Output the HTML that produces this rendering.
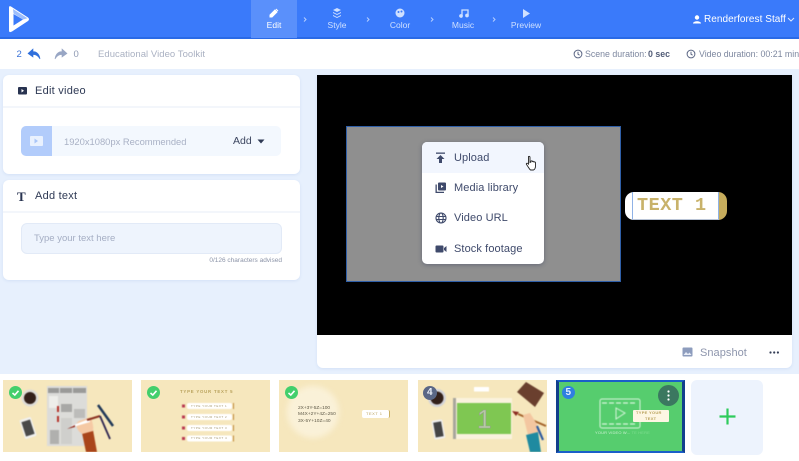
<!DOCTYPE html>
<html><head><meta charset="utf-8">
<style>
html,body{margin:0;padding:0}
body{width:799px;height:461px;overflow:hidden;position:relative;background:#e7f0fd;font-family:"Liberation Sans",sans-serif;color:#3a4560}
#w{position:absolute;left:0;top:0;width:799px;height:461px;filter:blur(.35px)}
.a{position:absolute}
.t{position:absolute;white-space:nowrap;line-height:1}
svg{position:absolute;overflow:visible}
.thumb{position:absolute;top:380px;width:129px;height:72px;background:#f6e7bd;overflow:hidden}
.chk{position:absolute;left:6px;top:6px;width:13px;height:13px;border-radius:50%;background:#43cf6c}
.nav{color:#cfe0ff;font-size:8.5px;text-align:center;width:50px}
.mi{font-size:11px;color:#3f4a6b;letter-spacing:.1px}
</style></head><body><div id="w">
<!-- header -->
<div class="a" style="left:0;top:0;width:799px;height:38px;background:#3a7afa"></div>
<div class="a" style="left:0;top:37px;width:799px;height:2px;background:#2a6ae6"></div>
<div class="a" style="left:251px;top:0;width:46px;height:38px;background:#5a90fb"></div>
<svg style="left:0;top:0" width="40" height="38"><path fill-rule="evenodd" d="M9 7.5Q9 5.5 11 6.5L28 17.5Q30 19.3 28 21L12 31.5Q9 33 9 30.5Z M13.5 14V25.5L23 19.5Z" fill="#fff"/><path d="M13 9L27.5 18.3L23 19.5L13.5 13.5Z" fill="#9dbefc"/></svg>
<svg style="left:269px;top:8px" width="10" height="10"><path d="M1 9V7L6 2L8 4L3 9Z M7 1L9 3" fill="#fff" stroke="#fff" stroke-width="1"/></svg>
<div class="t nav" style="left:249px;top:21px;color:#fff">Edit</div>
<svg style="left:332px;top:8px" width="10" height="10" fill="#cfe0ff"><path d="M5 0L9 2L5 4L1 2Z M1 4L5 6L9 4V5L5 7L1 5Z M1 7L5 9L9 7V8L5 10L1 8Z"/></svg>
<div class="t nav" style="left:312px;top:21px">Style</div>
<svg style="left:395px;top:8px" width="10" height="10"><circle cx="5" cy="5" r="4.5" fill="#cfe0ff"/><circle cx="3.5" cy="4" r="1" fill="#3a7afa"/><circle cx="6.5" cy="3.5" r="1" fill="#3a7afa"/></svg>
<div class="t nav" style="left:375px;top:21px">Color</div>
<svg style="left:459px;top:8px" width="10" height="10" fill="none" stroke="#cfe0ff" stroke-width="1.3"><path d="M3 8V2H9V7"/><circle cx="2" cy="8" r="1.2" fill="#cfe0ff"/><circle cx="8" cy="7.5" r="1.2" fill="#cfe0ff"/></svg>
<div class="t nav" style="left:438px;top:21px">Music</div>
<svg style="left:522px;top:8px" width="10" height="11"><path d="M1 1L8 5.5L1 10Z" fill="#cfe0ff"/></svg>
<div class="t nav" style="left:501px;top:21px">Preview</div>
<svg style="left:0;top:0" width="799" height="38" fill="none" stroke="#b5ceff" stroke-width="1"><path d="M304 17.5l2 2-2 2M367 17.5l2 2-2 2M431 17.5l2 2-2 2M493 17.5l2 2-2 2"/></svg>
<svg style="left:693px;top:15px" width="8" height="9" fill="#fff"><circle cx="4" cy="2.5" r="2.2"/><path d="M0 8.5C0 5.5 8 5.5 8 8.5Z"/></svg>
<div class="t" style="left:704px;top:14.5px;color:#fff;font-size:10px;letter-spacing:.05px">Renderforest Staff</div>
<svg style="left:787px;top:17px" width="8" height="6" fill="none" stroke="#dbe7ff" stroke-width="1"><path d="M1 1l3 3 3-3"/></svg>
<!-- sub bar -->
<div class="a" style="left:0;top:39px;width:799px;height:30px;background:#fff"></div>
<div class="t" style="left:16.5px;top:49.5px;font-size:9.5px;color:#3a72d8">2</div>
<svg style="left:27px;top:48px" width="14" height="12"><path d="M6 1L1 5.5L6 9V6.5C9 6.5 11 7.5 13 11C12.5 6.5 10 3.5 6 3.5Z" fill="#2f6fdc" stroke="#2f6fdc" stroke-width=".6"/></svg>
<svg style="left:54px;top:48px" width="14" height="12"><path d="M8 1L13 5.5L8 9V6.5C5 6.5 3 7.5 1 11C1.5 6.5 4 3.5 8 3.5Z" fill="#98a6c4" stroke="#98a6c4" stroke-width=".6"/></svg>
<div class="t" style="left:73.5px;top:49.5px;font-size:9.5px;color:#8e99b3">0</div>
<div class="t" style="left:98px;top:49.5px;font-size:9.5px;color:#aab1c2;letter-spacing:.05px">Educational Video Toolkit</div>
<svg style="left:573px;top:49px" width="10" height="10" fill="none" stroke="#5c6785" stroke-width="1"><circle cx="5" cy="5" r="3.9"/><path d="M5 2.8V5.2L6.6 6.2"/></svg>
<div class="t" style="left:585px;top:49.5px;font-size:8.8px;color:#7d879f">Scene duration:</div>
<div class="t" style="left:648px;top:49.5px;font-size:8.8px;color:#525c77;font-weight:bold">0 sec</div>
<svg style="left:686px;top:49px" width="10" height="10" fill="none" stroke="#5c6785" stroke-width="1"><circle cx="5" cy="5" r="3.9"/><path d="M5 2.8V5.2L6.6 6.2"/></svg>
<div class="t" style="left:699px;top:49.5px;font-size:8.8px;color:#7d879f">Video duration: 00:21 min</div>
<!-- left cards -->
<div class="a" style="left:3px;top:75px;width:297px;height:99px;background:#fff;border-radius:6px;box-shadow:0 1px 3px #d3e0f6"></div>
<div class="a" style="left:3px;top:106px;width:297px;height:2px;background:#f3f6fb"></div>
<svg style="left:17px;top:86px" width="11" height="10"><rect x="1" y="1" width="9" height="7.5" rx="1" fill="#283350"/><path d="M4.5 3L7 4.8L4.5 6.5Z" fill="#fff"/></svg>
<div class="t" style="left:35px;top:85.5px;font-size:11px;color:#2f3a55;letter-spacing:.25px">Edit video</div>
<div class="a" style="left:21px;top:126px;width:260px;height:30px;background:#f3f8fe;border-radius:5px"></div>
<div class="a" style="left:21px;top:126px;width:31px;height:30px;background:#b2ccfb;border-radius:5px 0 0 5px"></div>
<div class="a" style="left:30px;top:136px;width:13px;height:10px;background:#e9f1fe;border-radius:1px"></div>
<svg style="left:34px;top:138px" width="5" height="6"><path d="M0.5 0.5L4 3L0.5 5.5Z" fill="#a9c5f8"/></svg>
<div class="t" style="left:64px;top:136.5px;font-size:9.4px;color:#a9b1c5">1920x1080px Recommended</div>
<div class="t" style="left:233px;top:136px;font-size:10.5px;color:#3c4660">Add</div>
<svg style="left:257px;top:139px" width="8" height="5"><path d="M0.5 0.5H7.5L4 4.5Z" fill="#2f3a55"/></svg>
<div class="a" style="left:3px;top:180px;width:297px;height:100px;background:#fff;border-radius:6px;box-shadow:0 1px 3px #d3e0f6"></div>
<div class="a" style="left:3px;top:211px;width:297px;height:2px;background:#f3f6fb"></div>
<div class="t" style="left:17px;top:190px;font-family:'Liberation Serif',serif;font-weight:bold;font-size:13px;color:#283350">T</div>
<div class="t" style="left:35px;top:190.5px;font-size:11px;color:#2f3a55;letter-spacing:.25px">Add text</div>
<div class="a" style="left:21px;top:223px;width:259px;height:29px;background:#eef4fd;border:1px solid #e2eaf7;border-radius:6px"></div>
<div class="t" style="left:34px;top:234px;font-size:9.5px;color:#a5aec4">Type your text here</div>
<div class="t" style="right:517px;top:257.5px;font-size:6.5px;color:#8c94a8">0/126 characters advised</div>
<!-- preview -->
<div class="a" style="left:317px;top:75px;width:475px;height:293px;background:#fff;border-radius:0 0 6px 6px;box-shadow:0 1px 3px #d3e0f6"></div>
<div class="a" style="left:317px;top:75px;width:475px;height:260px;background:#000"></div>
<div class="a" style="left:346px;top:126px;width:273px;height:154px;background:#8f8f8f;border:1px solid #2f5fa8"></div>
<div class="a" style="left:422px;top:142px;width:122px;height:122px;background:#fff;border-radius:5px;box-shadow:0 1px 4px rgba(50,60,90,.45)"></div>
<div class="a" style="left:422px;top:142px;width:122px;height:31px;background:#f2f6fe;border-radius:5px 5px 0 0"></div>
<svg style="left:435px;top:152px" width="12" height="12" fill="#3f4a6b"><rect x="1" y="0.5" width="9" height="1.3"/><path d="M5.5 3L9.5 7H7V11H4V7H1.5Z"/></svg>
<div class="t mi" style="left:454px;top:152.5px">Upload</div>
<svg style="left:435px;top:182px" width="12" height="12" fill="#3f4a6b"><path d="M0.5 2.5H1.8V9.7H9V11H0.5Z"/><rect x="3" y="0.5" width="8" height="8" rx="1"/><path d="M6 3L8.5 4.5L6 6Z" fill="#fff"/></svg>
<div class="t mi" style="left:454px;top:182.5px">Media library</div>
<svg style="left:435px;top:212px" width="12" height="12" fill="none" stroke="#3f4a6b" stroke-width="1.1"><circle cx="6" cy="6" r="5"/><ellipse cx="6" cy="6" rx="2.2" ry="5"/><path d="M1 4.5H11M1 7.5H11"/></svg>
<div class="t mi" style="left:454px;top:212.5px">Video URL</div>
<svg style="left:435px;top:244px" width="12" height="10" fill="#3f4a6b"><rect x="0.5" y="1.5" width="8" height="7" rx="1"/><path d="M9 4L11.5 2V8L9 6Z"/></svg>
<div class="t mi" style="left:454px;top:243.5px">Stock footage</div>
<svg style="left:525px;top:155px" width="12" height="16"><path d="M3.5 1.5C4.5 1 5 1.7 5 2.5V7.5L6 7V6C7 5.5 7.5 6 7.5 6.5C8.5 6 9 6.5 9 7C10 6.5 10.5 7.5 10.5 8V11C10.5 13 9.5 14.5 8.5 15H5.5C4 14 3.5 12 1.5 9.5C1 8.5 2 7.5 3.5 9V2.5C3.5 2 3.3 1.7 3.5 1.5Z" fill="#fff" stroke="#222" stroke-width=".9"/></svg>
<!-- text pill -->
<div class="a" style="left:709px;top:192px;width:18px;height:28px;background:#c6ac5c;border-radius:0 9px 9px 0"></div>
<div class="a" style="left:625px;top:192px;width:94px;height:28px;background:#fff;border-radius:9px 2px 2px 9px"></div>
<div class="a" style="left:632px;top:192px;width:85px;height:27px;border-left:1px solid #8fb2e6;border-right:1px solid #8fb2e6;border-bottom:1px solid #b9c4d6"></div>
<div class="t" style="left:637px;top:196.5px;font-family:'Liberation Mono',monospace;font-weight:bold;font-size:18.5px;color:#c8b26a;letter-spacing:.5px;white-space:pre">TEXT 1</div>
<!-- snapshot -->
<svg style="left:682px;top:347px" width="11" height="10"><rect x="0.5" y="0.5" width="10" height="9" rx="1" fill="#8d9cbd"/><path d="M1.5 8L4 5L6 7L7.5 5.5L9.5 8Z" fill="#e7ecf6"/></svg>
<div class="t" style="left:700px;top:347.5px;font-size:11px;color:#8d95ac;letter-spacing:.05px">Snapshot</div>
<svg style="left:769px;top:351px" width="11" height="3" fill="#333c55"><circle cx="1.5" cy="1.5" r="1.1"/><circle cx="5.2" cy="1.5" r="1.1"/><circle cx="8.9" cy="1.5" r="1.1"/></svg>
<!-- bottom strip -->
<div class="a" style="left:0;top:374px;width:799px;height:87px;background:#fff"></div>
<div class="thumb" style="left:3px">
 <svg width="129" height="72" style="left:0;top:0;filter:blur(.5px)">
  <rect x="44" y="6" width="40" height="60" fill="#dcdcd9"/>
  <rect x="45" y="8" width="11" height="5" fill="#9a9a98"/><rect x="57" y="8" width="12" height="5" fill="#9a9a98"/><rect x="70" y="8" width="13" height="5" fill="#9a9a98"/>
  <rect x="46" y="16" width="9" height="12" fill="#eeeeea"/><rect x="58" y="24" width="11" height="8" fill="#a8a8a6"/><rect x="71" y="29" width="11" height="9" fill="#bcbcba"/>
  <rect x="47" y="50" width="9" height="14" fill="#b0b0ae"/><rect x="58" y="38" width="11" height="26" fill="#cfcfcc"/>
  <rect x="54" y="26" width="2" height="6" fill="#b5332b"/><rect x="54" y="36" width="2" height="6" fill="#b5332b"/>
  <circle cx="27" cy="18" r="8.5" fill="#dedcd6"/><circle cx="27" cy="18" r="6" fill="#33201a"/>
  <g transform="rotate(-18 25 48)"><rect x="19" y="38" width="12" height="20" rx="1.5" fill="#f0f0ee"/><rect x="20.5" y="40.5" width="9" height="15" fill="#4a4a4a"/></g>
  <path d="M83 72L79 53L90 50L94 72Z" fill="#a9451a"/>
  <path d="M76 41C71 44 74 50 79 54L90 51C91 46 89 42 88 37Z" fill="#f5c9a4"/>
  <path d="M68 46L86 39L87 42L70 47Z" fill="#fff"/><path d="M64 49L72 45L72 47Z" fill="#932a1f"/>
  <path d="M84 40L97 36" stroke="#8b3222" stroke-width="2"/>
  <path d="M95 25L110 46" stroke="#1f3758" stroke-width="2.5"/><path d="M97 36L107 59" stroke="#2c2450" stroke-width="1.8"/>
 </svg>
 <div class="chk"></div>
 <svg width="13" height="13" style="left:6px;top:6px"><path d="M3.5 7L5.8 9L9.5 4.8" fill="none" stroke="#fff" stroke-width="1.6"/></svg>
</div>
<div class="thumb" style="left:141px">
 <div class="t" style="left:39px;top:10px;font-size:4.3px;color:#b9a25c;letter-spacing:.8px;font-weight:bold">TYPE YOUR TEXT 5</div>
 <svg width="129" height="72" style="left:0;top:0;filter:blur(.4px)">
  <g fill="#fff"><rect x="46" y="23" width="45" height="6" rx="2"/><rect x="46" y="34" width="45" height="6" rx="2"/><rect x="46" y="45" width="45" height="6" rx="2"/><rect x="46" y="55.5" width="45" height="6" rx="2"/></g>
  <g fill="#c08a3a"><rect x="92" y="23" width="1" height="6"/><rect x="92" y="34" width="1" height="6"/><rect x="92" y="45" width="1" height="6"/><rect x="92" y="55.5" width="1" height="6"/></g>
  <g fill="#b83a52"><rect x="41" y="24.5" width="3" height="3"/><rect x="41" y="35.5" width="3" height="3"/><rect x="41" y="46.5" width="3" height="3"/><rect x="41" y="57" width="3" height="3"/></g>
 </svg>
 <div class="t" style="left:50px;top:24.5px;font-size:3px;color:#a89a70;letter-spacing:.5px">TYPE YOUR TEXT 1</div>
 <div class="t" style="left:50px;top:35.5px;font-size:3px;color:#a89a70;letter-spacing:.5px">TYPE YOUR TEXT 2</div>
 <div class="t" style="left:50px;top:46.5px;font-size:3px;color:#a89a70;letter-spacing:.5px">TYPE YOUR TEXT 3</div>
 <div class="t" style="left:50px;top:57px;font-size:3px;color:#a89a70;letter-spacing:.5px">TYPE YOUR TEXT 4</div>
 <div class="chk"></div>
 <svg width="13" height="13" style="left:6px;top:6px"><path d="M3.5 7L5.8 9L9.5 4.8" fill="none" stroke="#fff" stroke-width="1.6"/></svg>
</div>
<div class="thumb" style="left:279px">
 <div class="a" style="left:8px;top:6px;width:52px;height:52px;border-radius:50%;background:#faf1d8;filter:blur(3px)"></div>
 <div class="t" style="left:19px;top:26.5px;font-size:4.8px;color:#5f5a48">2X+3Y-5Z=100</div>
 <div class="t" style="left:19px;top:33px;font-size:4.8px;color:#5f5a48">M4X+2Y+4Z=250</div>
 <div class="t" style="left:19px;top:39.5px;font-size:4.8px;color:#5f5a48">3X-5Y+10Z=40</div>
 <div class="a" style="left:83px;top:30px;width:27px;height:8px;background:#fff;border-radius:2px;border-right:1px solid #c9b063"></div>
 <div class="t" style="left:87px;top:32px;font-size:4px;color:#b9a25c;letter-spacing:.5px">TEXT 1</div>
 <div class="chk"></div>
 <svg width="13" height="13" style="left:6px;top:6px"><path d="M3.5 7L5.8 9L9.5 4.8" fill="none" stroke="#fff" stroke-width="1.6"/></svg>
</div>
<div class="thumb" style="left:418px">
 <svg width="129" height="72" style="left:0;top:0;filter:blur(.5px)">
  <rect x="36" y="18" width="58" height="41" fill="#faf2dd"/><rect x="39" y="23" width="54" height="31" fill="#7fc752"/>
  <rect x="35" y="18" width="3" height="41" fill="#a8a69c"/>
  <rect x="56" y="7" width="15" height="4.5" fill="#fff"/>
  <circle cx="19" cy="18" r="9" fill="#d4d4d8"/><circle cx="19" cy="18" r="6.5" fill="#33201a"/>
  <g transform="rotate(-10 20 50)"><rect x="15" y="40" width="11" height="19" rx="1.5" fill="#eee"/><rect x="16.5" y="42" width="8" height="15" fill="#444"/></g>
  <path d="M99 12L108 2L126 13L117 27Z" fill="#6a3f2e"/>
  <path d="M100 34L128 46" stroke="#a3622a" stroke-width="2"/><path d="M94 31L101 32L98 36Z" fill="#8b2a20"/>
  <path d="M105 35L112 33L120 46L120 56L110 55Z" fill="#f3c6a0"/><path d="M108 55L120 52L123 72L112 72Z" fill="#1f8aa0"/>
  <path d="M119 46L125 60" stroke="#2c5a9e" stroke-width="2.2"/>
 </svg>
 <div class="t" style="left:59px;top:26px;font-size:26px;color:#b7cca3;-webkit-text-stroke:.5px #9a9a9a">1</div>
 <div class="a" style="left:5px;top:6px;width:14px;height:14px;border-radius:50%;background:#5a6786"></div>
 <div class="t" style="left:9px;top:8px;font-size:10px;font-weight:bold;color:#e9edf5">4</div>
</div>
<div class="thumb" style="left:556px;height:73px;background:#56cd6e;box-sizing:border-box;border:2px solid #1a5fc8;border-left:3px solid #123f8c;border-right:3px solid #123f8c">
 <svg width="123" height="70" style="left:0;top:0;filter:blur(.4px)" fill="none" stroke="#d8f5dc" stroke-width="1"><rect x="41" y="17" width="40" height="29" rx="2"/><path d="M43 21H78M43 42H78" stroke-dasharray="5 2" stroke-width="1.3"/><path d="M57 26L66 31L57 37Z"/></svg>
 <div class="a" style="left:74px;top:28px;width:36px;height:12px;background:#fdf6e3;border-radius:1px"></div>
 <div class="t" style="left:77px;top:29px;font-size:4px;color:#b9a25c;font-weight:bold;letter-spacing:.3px">TYPE YOUR</div>
 <div class="t" style="left:86px;top:35px;font-size:4px;color:#b9a25c;font-weight:bold;letter-spacing:.3px">TEXT</div>
 <div class="t" style="left:36px;top:49px;font-size:4px;color:#c9f0d0;letter-spacing:.15px">YOUR VIDEO W... <span style="color:#7fdc90">TE HERE</span></div>
 <div class="a" style="left:3px;top:4px;width:13px;height:13px;border-radius:50%;background:#2f7fe0"></div>
 <div class="t" style="left:6.5px;top:5.5px;font-size:10px;font-weight:bold;color:#e4efff">5</div>
 <div class="a" style="left:99px;top:3px;width:21px;height:21px;border-radius:50%;background:#3b7860"></div>
 <svg width="21" height="21" style="left:99px;top:3px" fill="#fff"><circle cx="10.5" cy="6.5" r="1.1"/><circle cx="10.5" cy="10.5" r="1.1"/><circle cx="10.5" cy="14.5" r="1.1"/></svg>
</div>
<div class="a" style="left:691px;top:380px;width:72px;height:75px;background:#edf3fd;border-radius:6px"></div>
<svg style="left:719px;top:408px" width="17" height="17"><path d="M8.5 0.5V16.5M0.5 8.5H16.5" stroke="#2ecb5c" stroke-width="2.2"/></svg>
</div></body></html>
